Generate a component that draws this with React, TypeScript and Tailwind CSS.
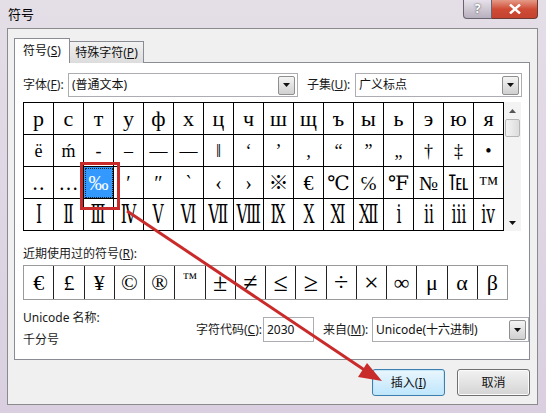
import React from "react";

const ui = "font-['Noto_Sans','Noto_Sans_CJK_SC',sans-serif]";
const serif = "font-['Liberation_Serif','DejaVu_Serif','Noto_Sans_CJK_SC',serif]";

const rows: string[][] = [
  ["р", "с", "т", "у", "ф", "х", "ц", "ч", "ш", "щ", "ъ", "ы", "ь", "э", "ю", "я"],
  ["ё", "ḿ", "‐", "–", "—", "―", "‖", "‘", "’", "‚", "“", "”", "„", "†", "‡", "•"],
  ["‥", "…", "‰", "′", "″", "‵", "‹", "›", "※", "€", "℃", "℅", "℉", "№", "℡", "™"],
  ["Ⅰ", "Ⅱ", "Ⅲ", "Ⅳ", "Ⅴ", "Ⅵ", "Ⅶ", "Ⅷ", "Ⅸ", "Ⅹ", "Ⅺ", "Ⅻ", "ⅰ", "ⅱ", "ⅲ", "ⅳ"],
];

const rowSize = ["text-[22px]", "text-[18px]", "text-[20px]", "text-[25px]"];

const recent = ["€", "£", "¥", "©", "®", "™", "±", "≠", "≤", "≥", "÷", "×", "∞", "μ", "α", "β"];

const DownArrow = () => (
  <svg width="7" height="4" viewBox="0 0 7 4">
    <path d="M0 0h7L3.5 4z" fill="#111" />
  </svg>
);

function Combo({ width, text }: { width: string; text: string }) {
  return (
    <div className={`${width} h-[24px] bg-white border border-[#abadb3] flex items-center pl-[3px] pr-[2px]`}>
      <span className="flex-1 text-[12px] leading-none text-[#111] whitespace-nowrap">{text}</span>
      <div className="w-[17px] h-[19px] border border-[#8e8f8f] rounded-[2px] bg-gradient-to-b from-[#f4f4f4] to-[#d0d0d0] flex items-center justify-center">
        <DownArrow />
      </div>
    </div>
  );
}

export default function App() {
  return (
    <div className={`relative w-[546px] h-[413px] overflow-hidden bg-gradient-to-b from-[#e4dee7] to-[#d9cfe0] flex flex-col ${ui}`}>
      {/* title bar */}
      <div className="h-[28px] flex items-start justify-between pl-[8px] pr-[8px]">
        <span className="mt-[5px] text-[13px] text-black">符号</span>
        <div className="flex">
          <div className="w-[29px] h-[19px] border border-[#6b6470] border-t-0 rounded-bl-[4px] bg-gradient-to-b from-[#e6e1ea] to-[#b7b0bd] flex items-center justify-center text-[12px] font-bold text-white [text-shadow:0_0_2px_#333]">
            ?
          </div>
          <div className="w-[46px] h-[19px] border border-[#6b3a33] border-t-0 border-l-0 rounded-br-[4px] bg-gradient-to-b from-[#e49a88] via-[#cf4b35] to-[#c4432f] flex items-center justify-center">
            <svg width="12" height="10" viewBox="0 0 12 10">
              <path d="M1 0.5 L11 9.5 M11 0.5 L1 9.5" stroke="#fff" strokeWidth="2.4" />
            </svg>
          </div>
        </div>
      </div>

      {/* client area */}
      <div className="ml-[7px] w-[531px] h-[377px] bg-[#f0f0f0] border border-[#8b8b8b] flex flex-col pl-[6px] pt-[9px]">
        {/* tabs */}
        <div className="flex items-end h-[25px] relative z-10">
          <div className="w-[56px] h-[25px] bg-white border border-[#898c95] border-b-0 flex items-center justify-center text-[12px] text-[#111]">
            符号(<u>S</u>)
          </div>
          <div className="w-[74px] h-[22px] bg-gradient-to-b from-[#f2f2f2] to-[#dcdcdc] border border-[#898c95] border-l-0 border-b-0 flex items-center justify-center text-[12px] text-[#111]">
            特殊字符(<u>P</u>)
          </div>
        </div>

        {/* tab page */}
        <div className="-mt-px w-[516px] h-[298px] bg-white border border-[#898c95] flex flex-col pl-[8px] pt-[10px] text-[12px] text-[#1a1a1a]">
          <div className="flex items-center h-[24px]">
            <span className="w-[45px]">字体(<u>F</u>):</span>
            <Combo width="w-[230px]" text="(普通文本)" />
            <span className="ml-[9px] w-[48px]">子集(<u>U</u>):</span>
            <Combo width="w-[167px]" text="广义标点" />
          </div>

          <div className="mt-[5px] flex">
            <div className={`w-[481px] border-l border-t border-black ${serif}`}>
              {rows.map((r, ri) => (
                <div key={ri} className="flex">
                  {r.map((c, ci) => {
                    const sel = ri === 2 && ci === 2;
                    return (
                      <div
                        key={ci}
                        className={`w-[30px] h-[32px] border-r border-b border-black flex items-center justify-center overflow-hidden ${rowSize[ri]} leading-none ${
                          sel ? "bg-[#3399ff] text-white outline-1 outline-dotted outline-[#222] -outline-offset-2" : "text-black"
                        }`}
                      >
                        {ri === 3 ? <span className="inline-block scale-x-[0.62] scale-y-[1.05] whitespace-nowrap">{c}</span> : c}
                      </div>
                    );
                  })}
                </div>
              ))}
            </div>
            {/* scrollbar */}
            <div className="w-[17px] h-[129px] bg-[#f3f3f3] flex flex-col items-center">
              <div className="h-[17px] w-full flex items-center justify-center">
                <svg width="7" height="4" viewBox="0 0 7 4">
                  <path d="M0 4h7L3.5 0z" fill="#555" />
                </svg>
              </div>
              <div className="w-[15px] h-[18px] rounded-[2px] border border-[#b5b5b5] bg-gradient-to-r from-[#f4f4f4] to-[#dcdcdc]" />
              <div className="flex-1" />
              <div className="h-[17px] w-full flex items-center justify-center">
                <DownArrow />
              </div>
            </div>
          </div>

          <div className="mt-[14px] h-[18px] flex items-center">近期使用过的符号(<u>R</u>):</div>

          <div className={`mt-[2px] w-[485px] h-[35px] border border-[#9a9a9a] flex ${serif}`}>
            {recent.map((c, i) => (
              <div
                key={i}
                className={`flex-1 h-full ${i < recent.length - 1 ? "border-r border-[#222]" : ""} flex items-center justify-center text-black ${
                  c === "™" ? "text-[15px] items-start pt-[5px]" : c === "≤" || c === "≥" || c === "≠" || c === "±" || c === "÷" || c === "×" ? "text-[26px]" : "text-[22px]"
                } leading-none`}
              >
                {c}
              </div>
            ))}
          </div>

          <div className="mt-[9px] flex">
            <div className="flex flex-col w-[160px]">
              <span className="h-[18px] leading-[18px]">Unicode 名称:</span>
              <span className="mt-[4px] h-[18px] leading-[18px]">千分号</span>
            </div>
            <div className="flex items-center mt-[8px] h-[25px]">
              <span className="ml-[15px] w-[67px]">字符代码(<u>C</u>):</span>
              <div className="w-[51px] h-[25px] bg-white border border-[#abadb3] flex items-center pl-[3px] text-[12px] text-[#111]">
                2030
              </div>
              <span className="ml-[9px] w-[49px]">来自(<u>M</u>):</span>
              <div className="w-[157px] h-[25px] bg-white border border-[#abadb3] flex items-center pl-[3px] pr-[2px]">
                <span className="flex-1 text-[12px] text-[#111]">Unicode(十六进制)</span>
                <div className="w-[17px] h-[20px] border border-[#8e8f8f] rounded-[2px] bg-gradient-to-b from-[#f4f4f4] to-[#d0d0d0] flex items-center justify-center">
                  <DownArrow />
                </div>
              </div>
            </div>
          </div>
        </div>

        {/* buttons */}
        <div className="mt-[9px] flex justify-end gap-[12px] pr-[7px]">
          <div className="w-[73px] h-[27px] rounded-[3px] border border-[#3c7fb1] bg-gradient-to-b from-[#eaf6fd] to-[#bee6fd] shadow-[inset_0_0_0_1px_#c4e5f6] flex items-center justify-center text-[12px] text-[#111]">
            插入(<u>I</u>)
          </div>
          <div className="w-[73px] h-[27px] rounded-[3px] border border-[#707070] bg-gradient-to-b from-[#f2f2f2] to-[#d4d4d4] shadow-[inset_0_0_0_1px_#fcfcfc] flex items-center justify-center text-[12px] text-[#111]">
            取消
          </div>
        </div>
      </div>

      {/* annotation overlay: red box and arrow */}
      <div className="absolute left-[80px] top-[162px] w-[40px] h-[48px] border-[3px] border-[#c92a2a]" />
      <svg className="absolute left-0 top-0 pointer-events-none" width="546" height="413" viewBox="0 0 546 413">
        <line x1="127" y1="211" x2="366" y2="371" stroke="#c92a2a" strokeWidth="3" />
        <polygon points="382,381 358,377 367,363" fill="#c92a2a" />
      </svg>
    </div>
  );
}
